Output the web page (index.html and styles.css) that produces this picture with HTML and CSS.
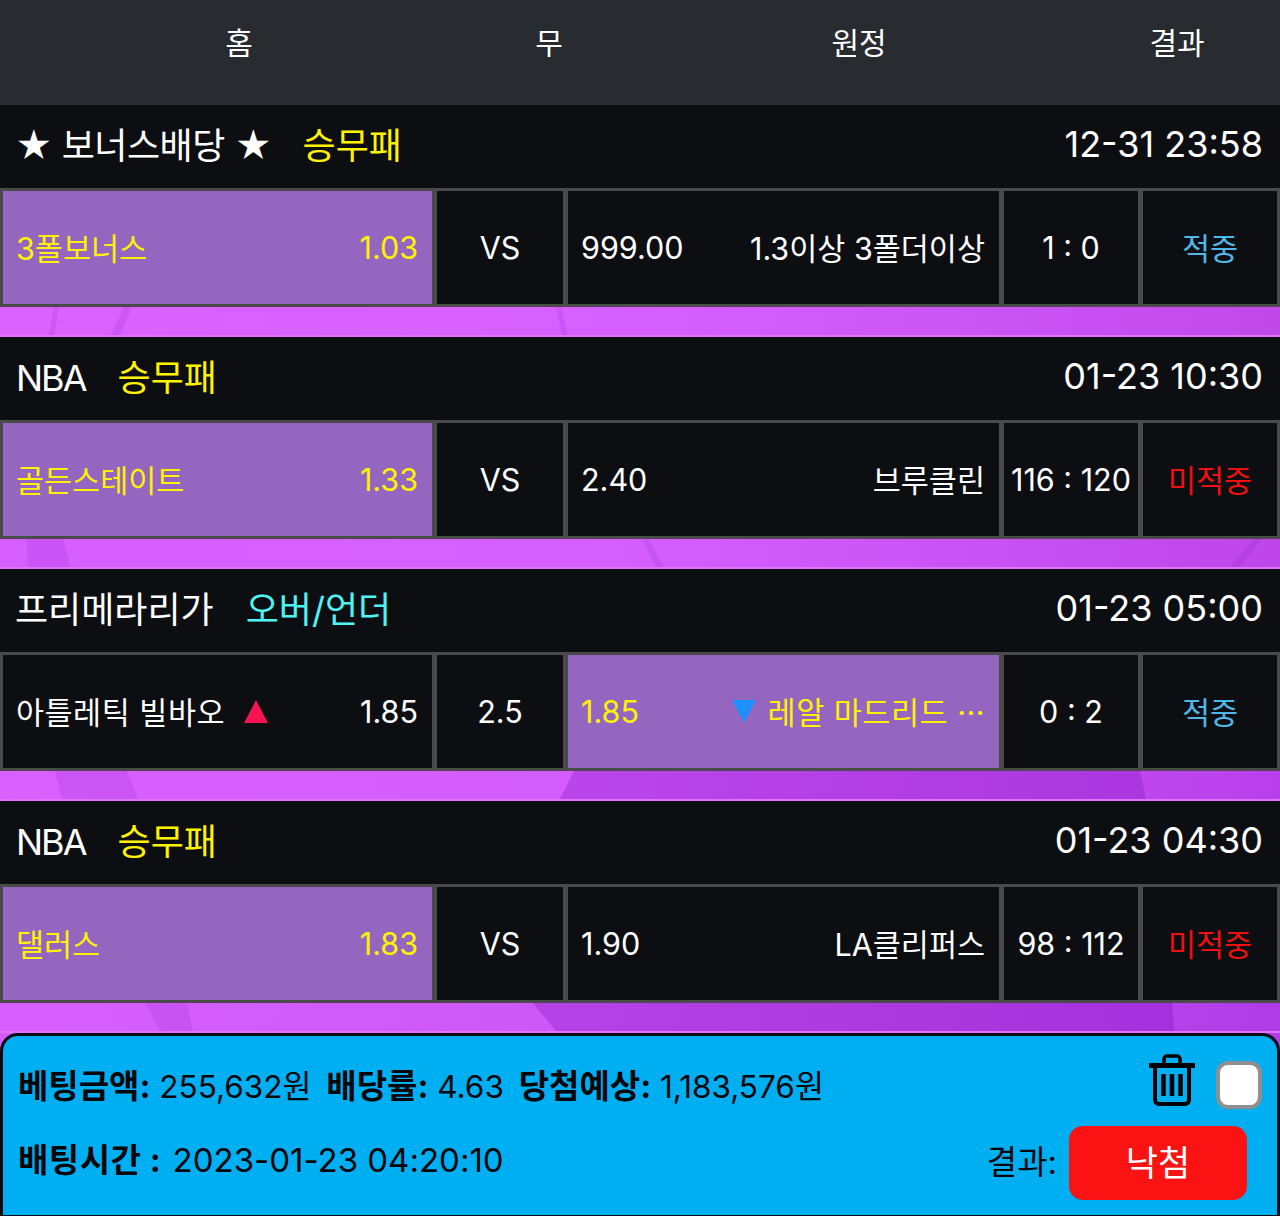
FILE: index.html

```html
<!DOCTYPE html>
<html lang="ko">
<head>
  <meta charset="UTF-8" />
  <meta name="viewport" content="width=device-width, initial-scale=1.0"/>
  <title>베팅내역</title>
  <link rel="stylesheet" href="styles.css">
</head>
<body>
  <div class="head">
    <div>홈</div>
    <div>무</div>
    <div>원정</div>
    <div>결과</div>
  </div>

  <div class="game">
    <div class="title">
      <div class="league bonus">★ 보너스배당 ★<span class="type yellow">승무패</span></div>
      <div class="time">12-31 23:58</div>
    </div>
    <div class="row">
      <div class="cell side picked"><span>3폴보너스</span><span>1.03</span></div>
      <div class="cell mid">VS</div>
      <div class="cell side"><span>999.00</span><span>1.3이상 3폴더이상</span></div>
      <div class="cell mid">1 : 0</div>
      <div class="cell mid hit">적중</div>
    </div>
    <svg class="strip strip1" viewBox="0 0 1280 30" preserveAspectRatio="none">
      <polygon class="shade" points="54,0 59,0 54,30 49,30"/>
      <polygon class="shade" points="124,0 132,0 120,30 111,30"/>
      <polygon class="shade" points="556,0 561,0 568,30 562,30"/>
    </svg>
  </div>

  <div class="game">
    <div class="title">
      <div class="league"><span class="abbr">NBA</span><span class="type yellow">승무패</span></div>
      <div class="time">01-23 10:30</div>
    </div>
    <div class="row">
      <div class="cell side picked"><span>골든스테이트</span><span>1.33</span></div>
      <div class="cell mid">VS</div>
      <div class="cell side"><span>2.40</span><span>브루클린</span></div>
      <div class="cell mid">116 : 120</div>
      <div class="cell mid miss">미적중</div>
    </div>
    <svg class="strip strip2" viewBox="0 0 1280 30" preserveAspectRatio="none">
      <polygon class="shade" points="26,0 64,0 70,30 28,30"/>
      <polygon class="shade" points="642,0 648,0 664,30 656,30"/>
      <polygon class="shade" points="1254,0 1262,0 1240,30 1230,30"/>
    </svg>
  </div>

  <div class="game">
    <div class="title">
      <div class="league">프리메라리가<span class="type cyan">오버/언더</span></div>
      <div class="time">01-23 05:00</div>
    </div>
    <div class="row">
      <div class="cell side"><span class="name">아틀레틱 빌바오<i class="tri up"></i></span><span>1.85</span></div>
      <div class="cell mid">2.5</div>
      <div class="cell side picked"><span>1.85</span><span class="name"><i class="tri down"></i>레알 마드리드 ···</span></div>
      <div class="cell mid">0 : 2</div>
      <div class="cell mid hit">적중</div>
    </div>
    <svg class="strip strip3" viewBox="0 0 1280 30" preserveAspectRatio="none">
      <polygon class="shade" points="55,0 127,0 138,30 62,30"/>
      <polygon class="shade-big" points="574,0 1140,0 1146,30 560,30"/>
    </svg>
  </div>

  <div class="game">
    <div class="title">
      <div class="league"><span class="abbr">NBA</span><span class="type yellow">승무패</span></div>
      <div class="time">01-23 04:30</div>
    </div>
    <div class="row">
      <div class="cell side picked"><span>댈러스</span><span>1.83</span></div>
      <div class="cell mid">VS</div>
      <div class="cell side"><span>1.90</span><span>LA클리퍼스</span></div>
      <div class="cell mid">98 : 112</div>
      <div class="cell mid miss">미적중</div>
    </div>
    <svg class="strip strip4" viewBox="0 0 1280 30" preserveAspectRatio="none">
      <polygon class="shade" points="145,0 187,0 193,30 160,30"/>
      <polygon class="shade-big" points="533,0 1172,0 1174,30 556,30"/>
    </svg>
  </div>

  <div class="panel-back">
    <div class="panel">
      <div class="line line1">
        <div class="info"><b>베팅금액:</b> 255,632원 <b class="next">배당률:</b> 4.63 <b class="next">당첨예상:</b> 1,183,576원</div>
        <div class="tools">
          <svg class="trash" width="46" height="54" viewBox="0 0 46 54" fill="none" stroke="#000">
            <path d="M15 10V6a3 3 0 0 1 3-3h10a3 3 0 0 1 3 3v4" stroke-width="3.5"/>
            <path d="M1 12.500h44" stroke-width="5" stroke-linecap="round"/>
            <path d="M6 13v34a4 4 0 0 0 4 4h26a4 4 0 0 0 4-4V13" stroke-width="4"/>
            <path d="M14.500 21v22M23 21v22M31.500 21v22" stroke-width="4.500"/>
          </svg>
          <div class="check"></div>
        </div>
      </div>
      <div class="line line2">
        <div class="info"><b class="stamp">배팅시간 :</b> 2023-01-23 04:20:10</div>
        <div class="outcome"><span class="outcome-label">결과:</span><span class="lost">낙첨</span></div>
      </div>
    </div>
  </div>
</body>
</html>
```

FILE: styles.css

```css
* {
  box-sizing: border-box;
}
html, body {
  margin: 0;
  padding: 0;
}
body {
  width: 1280px;
  height: 1216px;
  overflow: hidden;
  background: #0c0e11;
  color: #fff;
  font-family: Inter, "Noto Sans CJK KR", sans-serif;
  font-weight: 400;
}
.head {
  height: 105px;
  background: #282b2f;
  display: grid;
  grid-template-columns: 478px 142px 478px 158px;
  padding-bottom: 24px;
  font-size: 30px;
  align-items: center;
  text-align: center;
}
.title {
  height: 83px;
  padding: 0 17px 7px 15px;
  display: flex;
  justify-content: space-between;
  align-items: center;
  font-size: 36px;
}
.time {
  padding-top: 2px;
}
.abbr {
  letter-spacing: -2px;
  margin-left: 1px;
}
.type {
  margin-left: 32px;
}
.bonus {
  letter-spacing: -.5px;
}
.bonus .type {
  margin-left: 31px;
  letter-spacing: 0;
}
.yellow {
  color: #fff200;
}
.cyan {
  color: #4ff3f3;
}
.row {
  height: 119px;
  background: #4a4a4a;
  padding: 3px;
  display: grid;
  grid-template-columns: 429px 126px 431px 134px 134px;
  gap: 5px;
  font-size: 30.5px;
}
.cell {
  background: #0c0e11;
  display: flex;
  align-items: center;
  padding-bottom: 1px;
}
.side {
  justify-content: space-between;
  padding: 0 14px 1px 13px;
}
.mid {
  justify-content: center;
}
.picked {
  background: #9566c0;
  color: #fff200;
}
.hit {
  color: #4fb8e8;
}
.miss {
  color: #f01010;
}
.name {
  display: flex;
  align-items: center;
  gap: 12px;
  letter-spacing: .5px;
}
.tri {
  display: inline-block;
  width: 0;
  height: 0;
  border-left: 12px solid transparent;
  border-right: 12px solid transparent;
}
.tri.up {
  margin-left: 7px;
  border-bottom: 23px solid #f5144f;
}
.tri.down {
  border-top: 23px solid #1e8fff;
}
.strip {
  display: block;
  width: 100%;
  height: 30px;
  border-bottom: 2px solid #df72ff;
}
.shade {
  fill: rgba(130, 30, 190, .15);
}
.shade-big {
  fill: rgba(120, 10, 190, .28);
}
.strip1 {
  background: linear-gradient(90deg, #dc62ff 0%, #d660ff 50%, #c850f2 85%, #c149ea 100%);
}
.strip2 {
  background: linear-gradient(90deg, #d85fff 0%, #d660ff 45%, #cb55f6 70%, #bf46ea 100%);
}
.strip3 {
  background: linear-gradient(90deg, #da60ff 0%, #d25cfb 50%, #c44eef 80%, #b93fec 100%);
}
.strip4 {
  background: linear-gradient(90deg, #d85ffe 0%, #cd59f8 40%, #bf4cec 70%, #b03ce8 100%);
}
.panel-back {
  height: 182px;
  background: linear-gradient(90deg, #d45cfb 0%, #bf4cec 60%, #b03ce8 100%);
}
.panel {
  height: 182px;
  background: #00aef2;
  border: 3px solid #0a0a12;
  border-bottom: none;
  border-radius: 18px 18px 0 0;
  padding: 0 15px;
  color: #04060a;
  font-size: 31.5px;
}
.line {
  display: flex;
  justify-content: space-between;
  align-items: center;
}
.line1 {
  height: 92px;
}
.line2 {
  height: 70px;
  font-size: 33px;
}
.line1 .info {
  margin-top: 4px;
}
.line2 .info {
  margin-top: -10px;
}
.line1 b {
  font-size: 33px;
}
.next {
  margin-left: 6px;
}
.stamp {
  margin-right: 2px;
  letter-spacing: .5px;
}
.info b {
  font-weight: 700;
}
.tools {
  display: flex;
  align-items: center;
  gap: 21px;
}
.trash {
  margin-top: -4px;
}
.check {
  width: 46px;
  height: 48px;
  margin-top: 6px;
  background: #fff;
  border: 4px solid #8f8f8f;
  border-radius: 12px;
}
.outcome {
  display: flex;
  align-items: center;
  gap: 12px;
  margin-right: 15px;
}
.outcome-label {
  margin-top: -6px;
}
.lost {
  width: 178px;
  height: 74px;
  background: #fb1212;
  color: #fff;
  border-radius: 14px;
  display: flex;
  align-items: center;
  justify-content: center;
  font-size: 35px;
  padding-bottom: 6px;
}
```
